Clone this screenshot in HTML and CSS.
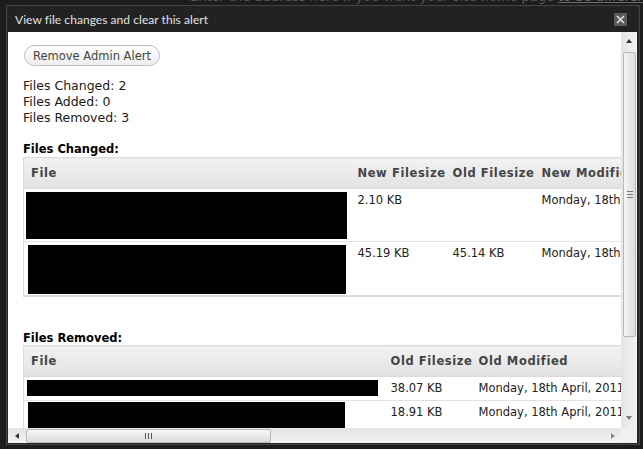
FILE: index.html
```html
<!DOCTYPE html>
<html>
<head>
<meta charset="utf-8">
<link rel="stylesheet" href="styles.css">
</head>
<body>
<div class="page">
  <p class="page-text">Enter the address here if you want your site home page <u>to be different from the directory</u> you</p>
</div>
<div class="dialog">
  <div class="titlebar">
    <span class="title">View file changes and clear this alert</span>
    <span class="close"><svg width="9" height="9" viewBox="0 0 9 9"><path d="M1 1L8 8M8 1L1 8" stroke="#e0e0e0" stroke-width="1.6"/></svg></span>
  </div>
  <div class="window">
    <div class="viewport">
      <button class="btn">Remove Admin Alert</button>
      <div class="stats">
        <div>Files Changed: 2</div>
        <div>Files Added: 0</div>
        <div>Files Removed: 3</div>
      </div>
      <h3 class="heading h-changed">Files Changed:</h3>
      <table class="grid changed">
        <colgroup><col class="c-file1"><col class="c-size"><col class="c-size2"><col class="c-mod"></colgroup>
        <thead><tr><th>File</th><th>New Filesize</th><th>Old Filesize</th><th>New Modified</th></tr></thead>
        <tbody>
          <tr class="r1"><td class="fcell"><div class="redact ra"></div></td><td>2.10 KB</td><td></td><td>Monday, 18th April, 2011</td></tr>
          <tr class="r2"><td class="fcell"><div class="redact rb"></div></td><td>45.19 KB</td><td>45.14 KB</td><td>Monday, 18th April, 2011</td></tr>
        </tbody>
      </table>
      <h3 class="heading h-removed">Files Removed:</h3>
      <table class="grid removed">
        <colgroup><col class="c-file2"><col class="c-osize"><col class="c-omod"></colgroup>
        <thead><tr><th>File</th><th>Old Filesize</th><th>Old Modified</th></tr></thead>
        <tbody>
          <tr class="r3"><td class="fcell"><div class="redact rc"></div></td><td>38.07 KB</td><td>Monday, 18th April, 2011</td></tr>
          <tr class="r4"><td class="fcell"><div class="redact rd"></div></td><td>18.91 KB</td><td>Monday, 18th April, 2011</td></tr>
        </tbody>
      </table>
    </div>
    <div class="vscroll">
      <div class="arrow up"></div>
      <div class="vthumb"><span class="grip-h"></span></div>
      <div class="vtrack"></div>
      <div class="arrow down"></div>
    </div>
    <div class="hscroll">
      <div class="arrow left"></div>
      <div class="hthumb"><span class="grip-v"></span></div>
      <div class="htrack"></div>
      <div class="arrow right"></div>
    </div>
    <div class="corner"></div>
  </div>
</div>
</body>
</html>
```

FILE: styles.css
```css
html, body {
  margin: 0;
  padding: 0;
}
body {
  width: 643px;
  height: 449px;
  background: #1d1d1d;
  overflow: hidden;
  position: relative;
  font-family: "DejaVu Sans", Verdana, sans-serif;
}
.page {
  height: 449px;
}
.page-text {
  margin: 0;
  padding: 0 0 0 190px;
  font-size: 13px;
  line-height: 13px;
  margin-top: -10px;
  color: #555;
  white-space: nowrap;
}
.page-text u {
  color: #6a6a6a;
}
.dialog {
  position: absolute;
  left: 6px;
  top: 5px;
  width: 629px;
  height: 437px;
  border: 1px solid #444;
  padding: 0 2px 1px 1px;
  background: #262626;
  display: flex;
  flex-direction: column;
}
.titlebar {
  height: 26px;
  flex: none;
  display: flex;
  align-items: center;
  justify-content: space-between;
  padding: 0 10px 0 7px;
  background: #222;
}
.title {
  font-family: Lato, sans-serif;
  font-size: 12px;
  letter-spacing: 0.05px;
  color: #e2e2e2;
}
.close {
  width: 13px;
  height: 13px;
  background: #5a5a5a;
  display: flex;
  align-items: center;
  justify-content: center;
  margin-top: 1px;
}
.close svg {
  display: block;
}
.window {
  flex: 1;
  display: grid;
  grid-template-columns: 613px 16px;
  grid-template-rows: 396px 15px;
  background: #fff;
}
.viewport {
  overflow: hidden;
  padding: 13px 0 0 15px;
  font-size: 11.5px;
  color: #1a1a1a;
}
.btn {
  display: block;
  height: 21px;
  width: 136px;
  padding: 0;
  margin: 0 0 0 1px;
  border: 1px solid #bdbdbd;
  border-radius: 11px;
  background: linear-gradient(#ffffff, #eeeeee);
  font-family: "DejaVu Sans", Verdana, sans-serif;
  font-size: 11.5px;
  color: #444;
}
.stats {
  margin-top: 12px;
  line-height: 16px;
  font-size: 12.5px;
}
.heading {
  margin: 0;
  font-size: 11.5px;
  font-weight: bold;
  line-height: 14px;
  color: #000;
}
.h-changed {
  margin-top: 16px;
}
.h-removed {
  margin-top: 34px;
}
.grid {
  border-collapse: collapse;
  table-layout: fixed;
  border: 1px solid #dcdcdc;
  border-bottom: 2px solid #dcdcdc;
  border-right: none;
  font-size: 11.5px;
}
.grid.changed {
  width: 720px;
  margin-top: 1px;
}
.grid.removed {
  width: 720px;
  margin-top: 0;
}
.c-file1 { width: 327px; }
.c-size { width: 95px; }
.c-size2 { width: 89px; }
.c-mod { width: 209px; }
.c-file2 { width: 360px; }
.c-osize { width: 88px; }
.c-omod { width: 272px; }
.grid th {
  height: 30px;
  padding: 0 0 0 7px;
  text-align: left;
  font-weight: bold;
  color: #444;
  letter-spacing: 0.6px;
  background: linear-gradient(#f2f2f2, #e2e2e2);
  border-bottom: 1px solid #dcdcdc;
  white-space: nowrap;
  overflow: hidden;
}
.grid td {
  padding: 4px 0 0 7px;
  vertical-align: top;
  color: #222;
  white-space: nowrap;
  overflow: hidden;
  border-bottom: 1px solid #e2e2e2;
}
.grid td.fcell {
  padding: 2px 0 0 2px;
}
.grid tr:last-child td {
  border-bottom: none;
}
.redact {
  background: #000;
}
.r1 td { height: 48px; }
.r2 td { height: 49px; }
.r3 td { height: 19px; }
.r4 td { height: 26px; }
.ra { width: 321px; height: 47px; margin-top: 1px; }
.rb { width: 318px; height: 49px; margin-top: 1px; margin-left: 2px; }
.rc { width: 351px; height: 16px; margin-top: 2px; margin-left: 1px; }
.rd { width: 317px; height: 26px; margin-left: 2px; margin-top: 0; }
.r3 td.fcell, .r4 td.fcell { padding-top: 1px; }

/* scrollbars */
.vscroll {
  display: flex;
  flex-direction: column;
  background: linear-gradient(90deg, #e4e4e4, #f4f4f4);
  border-left: 1px solid #e6e6e6;
}
.arrow {
  flex: none;
  position: relative;
}
.vscroll .arrow {
  height: 20px;
}
.arrow::after {
  content: "";
  position: absolute;
  width: 0;
  height: 0;
}
.arrow.up::after {
  left: 4px;
  top: 7px;
  border-left: 3.5px solid transparent;
  border-right: 3.5px solid transparent;
  border-bottom: 4px solid #333;
}
.arrow.down::after {
  left: 4px;
  top: 8px;
  border-left: 3.5px solid transparent;
  border-right: 3.5px solid transparent;
  border-top: 4px solid #777;
}
.vthumb {
  height: 283px;
  margin: 0 1px 0 1px;
  border: 1px solid #b9b9b9;
  border-radius: 2px;
  background: linear-gradient(90deg, #f6f6f6, #dcdcdc);
  display: flex;
  align-items: center;
  justify-content: center;
  flex: none;
}
.vtrack {
  flex: 1;
}
.grip-h {
  width: 6px;
  height: 5px;
  border-top: 1px solid #777;
  border-bottom: 1px solid #777;
  position: relative;
}
.grip-h::after {
  content: "";
  position: absolute;
  left: 0;
  right: 0;
  top: 2px;
  border-top: 1px solid #777;
}
.hscroll {
  display: flex;
  background: linear-gradient(#e4e4e4, #f4f4f4);
  border-top: 1px solid #e6e6e6;
}
.hscroll .arrow {
  width: 18px;
}
.arrow.left::after {
  left: 7px;
  top: 4px;
  border-top: 3.5px solid transparent;
  border-bottom: 3.5px solid transparent;
  border-right: 4px solid #333;
}
.arrow.right::after {
  left: 8px;
  top: 4px;
  border-top: 3.5px solid transparent;
  border-bottom: 3.5px solid transparent;
  border-left: 4px solid #888;
}
.hthumb {
  width: 245px;
  border: 1px solid #b9b9b9;
  border-radius: 2px;
  background: linear-gradient(#f6f6f6, #dcdcdc);
  display: flex;
  align-items: center;
  justify-content: center;
  flex: none;
  box-sizing: border-box;
}
.htrack {
  flex: 1;
}
.grip-v {
  width: 5px;
  height: 6px;
  border-left: 1px solid #555;
  border-right: 1px solid #555;
  position: relative;
}
.grip-v::after {
  content: "";
  position: absolute;
  top: 0;
  bottom: 0;
  left: 2px;
  border-left: 1px solid #555;
}
.corner {
  background: #f0f0f0;
}
```
